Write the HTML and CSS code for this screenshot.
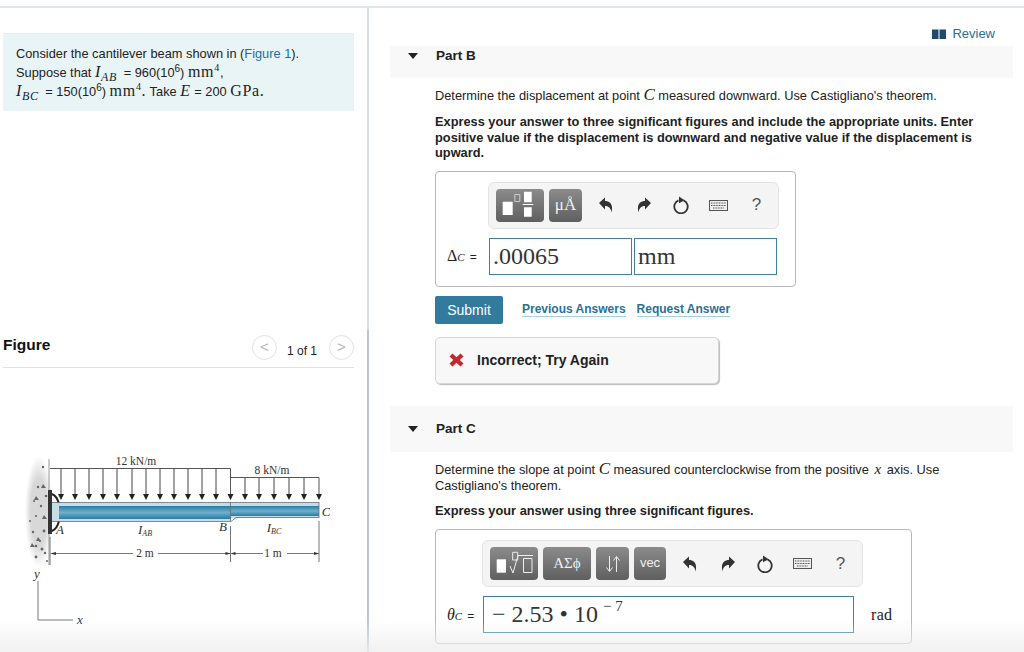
FILE: index.html
```html
<!DOCTYPE html>
<html lang="en">
<head>
    <meta charset="UTF-8">
    <title>Part B - Cantilever beam</title>
    <link rel="stylesheet" href="styles.css">
</head>
<body>
    <div class="page">
        <div class="left">
            <div class="intro">
                Consider the cantilever beam shown in (<a class="link" href="#">Figure 1</a>).<br>
                Suppose that <i class="m">I<sub>AB</sub></i> = 960(10<sup>6</sup>) <span class="m">mm<sup>4</sup></span>,<br>
                <i class="m">I<sub>BC</sub></i> = 150(10<sup>6</sup>) <span class="m">mm<sup>4</sup>.</span> Take <i class="m">E</i> = 200 <span class="m">GPa.</span>
            </div>
            <div class="fig-head">
                <h2>Figure</h2>
                <div class="pager">
                    <span class="round">&lt;</span>
                    <span class="count">1 of 1</span>
                    <span class="round">&gt;</span>
                </div>
            </div>
            <svg class="beam" width="305" height="180" viewBox="25 450 305 180">
                <defs>
                    <linearGradient id="steel" x1="0" y1="0" x2="0" y2="1">
                        <stop offset="0" stop-color="#2b7ba3"/>
                        <stop offset="0.5" stop-color="#6fb0cc"/>
                        <stop offset="1" stop-color="#2b7ba3"/>
                    </linearGradient>
                    <radialGradient id="wall">
                        <stop offset="0.6" stop-color="#d8d8d8"/>
                        <stop offset="1" stop-color="#fff"/>
                    </radialGradient>
                </defs>
                <ellipse cx="39" cy="511" rx="14" ry="56" fill="url(#wall)"/>
                <g fill="#666">
                    <circle cx="43" cy="466" r="1.200"/><circle cx="38" cy="486" r="1.200"/><circle cx="46" cy="495" r="1.300"/>
                    <circle cx="36" cy="515" r="1.100"/><circle cx="44" cy="530" r="1.400"/><circle cx="36" cy="545" r="1.300"/>
                    <circle cx="33" cy="531" r="1.200"/><circle cx="42" cy="548" r="1.500"/><circle cx="36" cy="556" r="1.400"/>
                    <circle cx="45" cy="552" r="1.200"/><circle cx="30" cy="520" r="1"/><circle cx="41" cy="505" r="1.200"/>
                    <circle cx="34" cy="500" r="1"/><circle cx="40" cy="540" r="1.100"/><circle cx="47" cy="560" r="1"/>
                    <path d="M43 483l3 4h-5zM36 495l3 4h-5zM44 514l3 4h-5zM32 542l3 4h-5zM38 536l3 4h-5z"/>
                </g>
                <path d="M49 458V564" stroke="#999" fill="none"/>
                <rect x="48" y="489" width="4" height="44" fill="#333"/>
                <rect x="52" y="505" width="7" height="13" fill="#8a8a86"/>
                <path d="M52 493q5 2 7 10M52 530q5 -2 7 -10" stroke="#222" stroke-width="2" fill="none"/>

                <rect x="52" y="502" width="179" height="18" fill="#c6dde8"/>
                <rect x="59" y="505" width="172" height="13" fill="url(#steel)"/>
                <rect x="231" y="502" width="88" height="15" fill="#c6dde8"/>
                <rect x="231" y="505" width="88" height="10" fill="url(#steel)"/>
                <path d="M52 501.500H319M52 520.500H231l5 -4H319M230.500 501V520M319 501V517" stroke="#59707c" stroke-width="0.800" fill="none"/>

                <path d="M50 467.500H230.500V494M230.500 476.500H319V494" stroke="#555" fill="none"/>
                <path d="M61 468V494M75 468V494M89 468V494M103 468V494M117 468V494M132 468V494M146 468V494M160 468V494M174 468V494M188 468V494M202 468V494M216 468V494M245 477V494M259 477V494M274 477V494M289 477V494M304 477V494" stroke="#444" fill="none"/>
                <path d="M58 493h6l-3 6zM72 493h6l-3 6zM86 493h6l-3 6zM100 493h6l-3 6zM114 493h6l-3 6zM129 493h6l-3 6zM143 493h6l-3 6zM157 493h6l-3 6zM171 493h6l-3 6zM185 493h6l-3 6zM199 493h6l-3 6zM213 493h6l-3 6zM227.500 493h6l-3 6zM242 493h6l-3 6zM256 493h6l-3 6zM271 493h6l-3 6zM286 493h6l-3 6zM301 493h6l-3 6zM316 493h6l-3 6z" fill="#222"/>

                <path d="M50 536V564M230.500 525V561M319 520V561M53 552.500H133M158 552.500H230.500M232 552.500H263M287 552.500H319" stroke="#777" fill="none"/>
                <path d="M50 552.500l6 -1.500v3zM230.500 552.500l-5 -1.500v3zM230.500 552.500l5 -1.500v3zM319 552.500l-5 -1.500v3z" fill="#333"/>
                <path d="M38 580V619H73" stroke="#777" fill="none"/>

                <g class="lbl">
                    <text x="136" y="464">12 kN/m</text>
                    <text x="272" y="473">8 kN/m</text>
                    <text x="145" y="556">2 m</text>
                    <text x="273" y="556">1 m</text>
                </g>
                <g class="lbl it">
                    <text x="60" y="533">A</text>
                    <text x="223" y="530">B</text>
                    <text x="326" y="515">C</text>
                    <text x="145" y="533">I<tspan class="tiny" dy="2">AB</tspan></text>
                    <text x="274" y="531">I<tspan class="tiny" dy="2">BC</tspan></text>
                    <text x="37" y="577">y</text>
                    <text x="80" y="623">x</text>
                </g>
            </svg>
        </div>

        <div class="right">
            <a class="review" href="#">
                <svg width="14" height="10" viewBox="0 0 14 10"><path d="M0 0.500h6.500v9.500H0zM7.500 0.500H14v9.500H7.500z" fill="#1e4d6b"/></svg>
                Review
            </a>

            <div class="part-bar part-b"><span class="tri"></span><b>Part B</b></div>
            <div class="part-body">
                <p class="q">Determine the displacement at point <i class="m big">C</i> measured downward. Use Castigliano's theorem.</p>
                <p class="q strong">Express your answer to three significant figures and include the appropriate units. Enter positive value if the displacement is downward and negative value if the displacement is upward.</p>

                <div class="answer answer-b">
                    <div class="toolbar tb-b">
                        <span class="btn btn-tpl">
                            <svg width="48" height="33" viewBox="0 0 48 33"><path d="M6.700 12.700h10V26h-10zM28 2.700h7.700v10.600H28zM28 18.300h7.700v9.400H28z" fill="#fff"/><path d="M18.800 5.500h5v7h-5z" fill="none" stroke="#ccc"/><path d="M26.700 15.500h10.600" stroke="#fff"/></svg>
                        </span>
                        <span class="btn btn-unit">μÅ</span>
                        <span class="tools">
                            <svg width="14" height="16"><use href="#undo"/></svg>
                            <svg width="14" height="16"><use href="#redo"/></svg>
                            <svg width="16" height="18"><use href="#reset"/></svg>
                            <svg width="19" height="11"><use href="#keys"/></svg>
                            <span class="help">?</span>
                        </span>
                    </div>
                    <div class="answer-row">
                        <span class="var"><span class="m">Δ<i class="sub">C</i></span><span class="eq">=</span></span>
                        <div class="field f-num">.00065</div>
                        <div class="field f-unit">mm</div>
                    </div>
                </div>

                <div class="actions">
                    <button type="button" class="submit">Submit</button>
                    <a class="act" href="#">Previous Answers</a>
                    <a class="act" href="#">Request Answer</a>
                </div>

                <div class="feedback">
                    <svg width="15" height="14" viewBox="0 0 15 14"><path d="M0.500 3.500L3.500 0.500 7.500 4.300 11.500 0.500 14.500 3.500 10.700 7 14.500 10.500 11.500 13.500 7.500 9.700 3.500 13.500 0.500 10.500 4.300 7z" fill="#c9252d"/></svg>
                    <b>Incorrect; Try Again</b>
                </div>
            </div>

            <div class="part-bar part-c"><span class="tri"></span><b>Part C</b></div>
            <div class="part-body">
                <p class="q">Determine the slope at point <i class="m big">C</i> measured counterclockwise from the positive <i class="m x">x</i> axis. Use<br>Castigliano's theorem.</p>
                <p class="q strong">Express your answer using three significant figures.</p>

                <div class="answer answer-c">
                    <div class="toolbar tb-c">
                        <span class="btn btn-root">
                            <svg width="48" height="33" viewBox="0 0 48 33"><path d="M6.700 12.300H16v13.400H6.700z" fill="#fff"/><path d="M20 19l3 7 5 -17.500h15M33.500 11.500h8.500v14h-8.500zM22.700 5.300h5v7.700h-5z" fill="none" stroke="#eee"/></svg>
                        </span>
                        <span class="btn btn-greek">ΑΣϕ</span>
                        <span class="btn btn-arrows">
                            <svg width="16" height="18" viewBox="0 0 16 18"><path d="M4.500 1V16M1.500 12.500l3 4 3 -4M11.500 17V2M8.500 5.500l3 -4 3 4" fill="none" stroke="#eee"/></svg>
                        </span>
                        <span class="btn btn-vec">vec</span>
                        <span class="tools">
                            <svg width="14" height="16"><use href="#undo"/></svg>
                            <svg width="14" height="16"><use href="#redo"/></svg>
                            <svg width="16" height="18"><use href="#reset"/></svg>
                            <svg width="19" height="11"><use href="#keys"/></svg>
                            <span class="help">?</span>
                        </span>
                    </div>
                    <div class="answer-row">
                        <span class="var"><span class="m"><i>θ</i><i class="sub">C</i></span><span class="eq">=</span></span>
                        <div class="field f-wide">− 2.53 • 10<sup>− 7</sup></div>
                        <span class="unit-text">rad</span>
                    </div>
                </div>
            </div>
        </div>
        <div class="fade"></div>
    </div>

    <svg width="0" height="0" class="defs">
        <symbol id="undo" viewBox="0 0 14 16"><path d="M0 6L6 0.500V4C11 4 14.500 7.500 12.500 15.500 12 11.500 10 9 6 9V12.500z" fill="#333"/></symbol>
        <symbol id="redo" viewBox="0 0 14 16"><path d="M14 6L8 0.500V4C3 4 -0.500 7.500 1.500 15.500 2 11.500 4 9 8 9V12.500z" fill="#333"/></symbol>
        <symbol id="reset" viewBox="0 0 16 18"><path d="M5.500 4.400a6.700 6.700 0 1 0 5 0" fill="none" stroke="#333" stroke-width="1.800"/><path d="M6 0.500l5.500 3.700-5.500 3z" fill="#333"/></symbol>
        <symbol id="keys" viewBox="0 0 19 11"><rect x="0.500" y="0.500" width="18" height="10" fill="#eee" stroke="#555"/><path d="M2 3h15M2 5.500h15M4 8h11" stroke="#555" stroke-dasharray="1 .6"/></symbol>
    </svg>
</body>
</html>
```

FILE: styles.css
```css
* {
    box-sizing: border-box;
}
html, body {
    margin: 0;
    height: 652px;
    overflow: hidden;
}
body {
    font-family: "Liberation Sans", Arial, sans-serif;
    font-size: 12.800px;
    color: #222;
    background-color: #fff;
}
a {
    text-decoration: none;
}
.defs {
    position: absolute;
}
.m {
    font-family: "Liberation Serif", serif;
    font-size: 15px;
}
.m.big {
    font-size: 17px;
}
.m.x {
    margin: 0 2px;
}
sub, sup {
    font-size: 9px;
    line-height: 0;
}
.page {
    display: flex;
    height: 646px;
    margin-top: 6px;
    border-top: 2px solid #e1e6ea;
    position: relative;
}

/* left column */
.left {
    width: 369px;
    flex: none;
    padding: 25px 13px 0 3px;
    border-right: 2px solid;
    border-image: linear-gradient(#d6dee5 50%, #b8c6d3 50%) 1;
}
.intro {
    height: 78px;
    padding: 11px 13px;
    line-height: 18px;
    background-color: #e9f4f7;
    border-top: 1px solid #e2eef1;
}
.intro .m {
    font-size: 16px;
    letter-spacing: 0.700px;
}
.intro sub {
    font-size: 12px;
    margin-right: 3px;
}
.intro sup {
    font-size: 10px;
}
.link {
    color: #1f6f9c;
}
.fig-head {
    display: flex;
    justify-content: space-between;
    align-items: center;
    height: 38px;
    margin-top: 219px;
    border-bottom: 1px solid #e2e2e2;
}
.fig-head h2 {
    margin: 0 0 7px;
    font-size: 15.500px;
    color: #111;
}
.pager {
    display: flex;
    align-items: center;
    gap: 10px;
    font-size: 12px;
    margin-bottom: 2px;
}
.count {
    padding-top: 6px;
    margin-right: 2px;
}
.round {
    width: 25px;
    height: 25px;
    border: 1px solid #e2e2e2;
    border-radius: 50%;
    color: #b5b5b5;
    text-align: center;
    line-height: 22px;
    font-size: 15px;
}
.beam {
    display: block;
    margin: 83px 0 0 22px;
}
.lbl text {
    font-family: "Liberation Serif", serif;
    font-size: 11.500px;
    fill: #333;
    text-anchor: middle;
}
.lbl.it text {
    font-style: italic;
    font-size: 13px;
}
.lbl .tiny {
    font-size: 8px;
}

/* right column */
.right {
    flex: 1;
    padding: 0 11px 0 21px;
    position: relative;
}
.review {
    position: absolute;
    top: 18px;
    right: 29px;
    color: #2c6d92;
    font-size: 13px;
    display: flex;
    align-items: center;
    gap: 6px;
}
.part-bar {
    display: flex;
    height: 32px;
    padding: 2px 0 0 18px;
    background-color: #f8f8f8;
    font-size: 13.500px;
    line-height: 15px;
    color: #222;
}
.part-b {
    margin-top: 38px;
}
.part-c {
    margin-top: 22px;
    height: 46px;
    padding-top: 15px;
}
.tri {
    width: 0;
    height: 0;
    margin: 5px 18px 0 0;
    border-left: 5px solid transparent;
    border-right: 5px solid transparent;
    border-top: 6px solid #222;
}
.part-body {
    padding-left: 45px;
    width: 623px;
}
.q {
    margin: 9px 0 0;
    line-height: 16px;
    color: #222;
}
.q.strong {
    font-weight: bold;
    line-height: 15.500px;
    margin-top: 10px;
    padding-right: 30px;
}
.part-c + .part-body .q {
    margin-top: 9px;
}
.part-c + .part-body .q.strong {
    margin-top: 9px;
}
.answer {
    border: 1px solid #b8b8b8;
    border-radius: 4px;
    margin-top: 10px;
}
.answer-b {
    width: 361px;
    height: 116px;
    padding: 10px 18px 0 11px;
}
.answer-c {
    width: 477px;
    height: 115px;
    margin-top: 11px;
    padding: 10px 10px 0 11px;
}
.toolbar {
    display: flex;
    align-items: center;
    height: 47px;
    border: 1px solid #e4e4e4;
    border-radius: 6px;
    background-color: #f4f4f4;
    padding: 0 0 0 7px;
    gap: 5px;
}
.tb-b {
    margin-left: 41px;
    width: 291px;
}
.tb-c {
    margin-left: 35px;
    width: 381px;
}
.btn {
    display: flex;
    align-items: center;
    justify-content: center;
    height: 33px;
    border-radius: 4px;
    background: linear-gradient(#8b8b8b, #5f5f5f);
    color: #f0f0f0;
}
.btn-tpl, .btn-root {
    width: 48px;
}
.btn-unit {
    width: 33px;
    font-family: "Liberation Serif", serif;
    font-size: 17px;
}
.btn-greek {
    width: 48px;
    font-family: "Liberation Serif", serif;
    font-size: 15px;
}
.btn-arrows {
    width: 33px;
}
.btn-vec {
    width: 32px;
    font-size: 13px;
    padding-bottom: 3px;
}
.tools {
    display: grid;
    grid-template-columns: repeat(5, 37.700px);
    justify-items: center;
    align-items: center;
}
.help {
    font-size: 17px;
    color: #555;
}
.answer-row {
    display: flex;
    align-items: center;
    margin-top: 9px;
    height: 37px;
}
.var {
    width: 41px;
    flex: none;
    font-size: 12px;
    white-space: nowrap;
}
.var .m {
    font-size: 16px;
}
.var .sub {
    font-size: 11px;
}
.eq {
    margin-left: 5px;
}
.field {
    height: 37px;
    border: 1px solid #3f7f9f;
    font-family: "Liberation Serif", serif;
    font-size: 24px;
    line-height: 34px;
    color: #333;
    padding-left: 3px;
    background-color: #fff;
}
.f-num {
    width: 143px;
    margin-left: 1px;
}
.f-unit {
    width: 143px;
    margin-left: 2px;
}
.f-wide {
    width: 371px;
    margin-left: -5px;
    padding-left: 8px;
}
.f-wide sup {
    font-size: 15px;
    position: relative;
    top: -2px;
    margin-left: 5px;
}
.unit-text {
    font-family: "Liberation Serif", serif;
    font-size: 16px;
    letter-spacing: 0.300px;
    margin-left: 17px;
}
.actions {
    display: flex;
    align-items: center;
    gap: 11px;
    margin-top: 9px;
}
.submit {
    width: 68px;
    height: 28px;
    margin-right: 8px;
    padding: 0;
    border: none;
    border-radius: 2px;
    background-color: #337a9f;
    color: #fff;
    font: 14px "Liberation Sans", Arial, sans-serif;
}
.act {
    font-size: 12px;
    font-weight: bold;
    color: #2a7097;
    border-bottom: 1px solid #a9cfe2;
    line-height: 13px;
}
.feedback {
    display: flex;
    align-items: center;
    gap: 13px;
    width: 284px;
    height: 47px;
    margin-top: 13px;
    padding-left: 13px;
    background-color: #f8f8f8;
    border: 1px solid #d6d6d6;
    border-radius: 5px;
    box-shadow: 1px 1px 1px #bbb;
    font-size: 14px;
}
.fade {
    position: absolute;
    left: 0;
    right: 0;
    bottom: 0;
    height: 32px;
    background: linear-gradient(rgba(238, 238, 238, 0), rgba(238, 238, 238, 0.85));
    pointer-events: none;
}
```
